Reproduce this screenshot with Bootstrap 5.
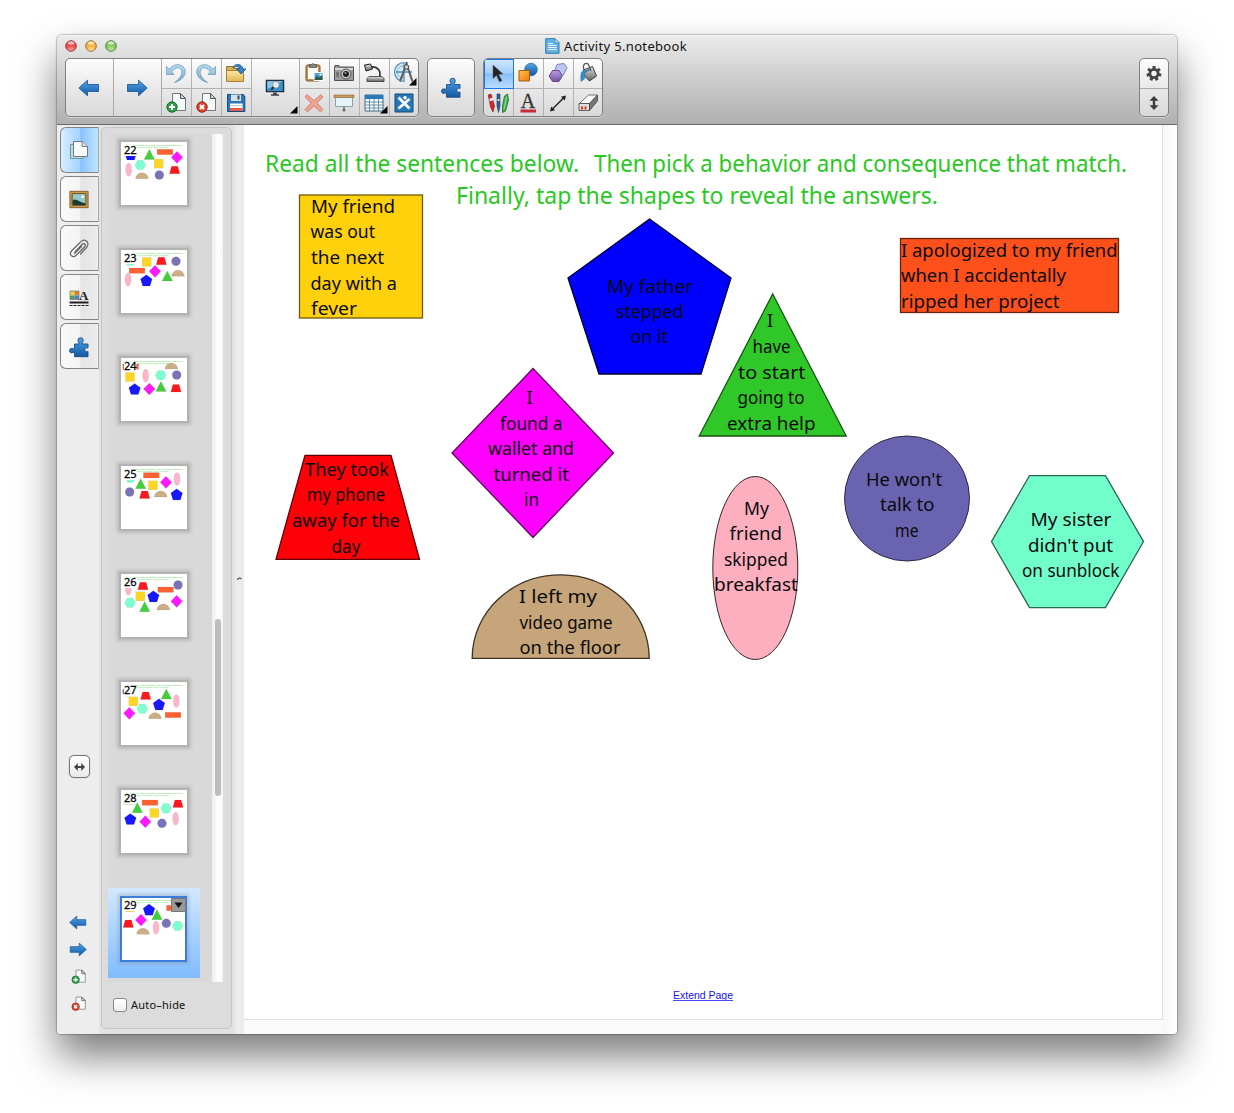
<!DOCTYPE html>
<html lang="en">
<head>
<meta charset="utf-8">
<title>Activity 5.notebook</title>
<link href="https://cdn.jsdelivr.net/npm/bootstrap@5.3.0/dist/css/bootstrap.min.css" rel="stylesheet">
<style>
body{background:#fff;font-family:"Noto Sans","Open Sans",sans-serif;height:1113px;overflow:hidden;padding:35px 57px 0;color:#111}
svg{display:block;flex:none;overflow:visible}
.app-window{width:1120px;height:999px;border-radius:5px 5px 4px 4px;background:#ececec;box-shadow:0 22px 40px rgba(0,0,0,.52),0 0 1px 1px rgba(0,0,0,.22);overflow:hidden}
.app-head{height:90px;background:linear-gradient(#ebebeb,#cfcfcf 45%,#b0b0b0);border-top:1px solid #f6f6f6;border-bottom:1px solid #696969}
.title-row{height:22px;padding:0 0 2px 8px}
.title-wrap{padding-left:426px}
.title-text{font-size:13px;letter-spacing:.33px;line-height:20px}
.tool-row{padding:0 8px;height:59px}
.tool-group{height:59px;border:1px solid #808080;border-radius:5px;background:linear-gradient(#fdfdfd,#e9e9e9 50%,#d9d9d9);overflow:hidden;box-shadow:0 1px 0 rgba(255,255,255,.4)}
.tool-big{width:48px;border-right:1px solid #aaa;position:relative;padding-right:2px}
.tool-grid{display:grid;grid-template-rows:30px 27px;grid-auto-columns:30px;grid-auto-flow:column}
.tool-cell{border-right:1px solid #b2b2b2;border-bottom:1px solid #b2b2b2;display:flex;align-items:center;justify-content:center;position:relative;padding-right:2px}
.tool-cell:nth-child(even){border-bottom:0}
.edge-grid{width:118px}
.edge-grid .tool-cell:nth-last-child(-n+2){width:28px;border-right:0;padding-right:0}
.tool-active{background:linear-gradient(#d2e8ff,#a3cffd 48%,#87c0fc 52%,#b8dcff);outline:1px solid #1c78e6;outline-offset:-1px}
.corner-mark{position:absolute;right:1px;bottom:2px}
.solo-group{width:48px}
.shape-group{width:120px}
.gear-group{width:30px}
.gear-cell{height:30px;border-bottom:1px solid #aaa}
.tab-rail{width:42px;background:#ededed;padding-top:2px}
.side-tab{width:39px;height:46px;margin-left:3px;margin-bottom:3px;padding-right:2px;border:1.5px solid #858585;border-right:1px solid #aaa;border-radius:6px 0 0 6px;background:linear-gradient(90deg,#fafafa,#f3f3f3 52%,#e4e4e4 53%,#ececec)}
.side-tab.on{background:linear-gradient(90deg,#d6efff,#a4d3ff 50%,#8ac2ff 54%,#bfe6ff)}
.width-btn{width:21px;height:23px;border:1px solid #777;border-radius:5px;background:linear-gradient(#fff,#e9e9e9);margin:383px 0 0 12px;box-shadow:0 0 1px #777}
.rail-foot{gap:12px;margin-top:137px}
.page-panel{width:136px;background:#e2e2e2;padding:2px 3px 5px 2px}
.panel-frame{border:2px solid #c6c6c6;border-width:1.5px;border-radius:5px;background:#dcdcdc;height:902px;padding:6px 0 0 6px}
.thumb-list{width:104px;height:848px;background:#d9d9d9;overflow:hidden}
.thumb-slot{height:108px;padding:6px 0 0 11px;position:relative}
.thumb-slot.picked{background:linear-gradient(#d3e8ff,#80bcff);width:92px;height:90px;margin-top:-2px;padding-top:8px}
.thumb-box{width:70px;height:67px;border:2px solid #b2b2b2;background:#fff;box-shadow:0 0 3px 2px rgba(120,120,120,.28)}
.picked .thumb-box{border:2px solid #3c7ddb;margin-left:1px;width:67px;height:66px}
.thumb-slot .menu-mark{position:absolute;left:63px;top:10px}
.scroll-track{width:11px;height:848px;background:linear-gradient(90deg,#eee,#fff 60%,#f3f3f3);padding:485px 0 0 3px}
.scroll-thumb{width:6px;height:177px;border-radius:3px;background:#bdbdbd}
.auto-row{padding:16px 0 0 5px;gap:4px}
.auto-box{width:14px;height:14px;border:1px solid #888;border-radius:3px;background:linear-gradient(#fff,#eee)}
.auto-text{font-size:11px;letter-spacing:.22px;line-height:14px}
.split-bar{width:9px;background:#ececec;padding-top:451px}
.canvas-area{width:933px;background:linear-gradient(90deg,#f4f4f4 918px,#f7f7f7 919px,#fff)}
.sheet{width:919px;height:895px;background:#fff;border-right:1px solid #e1e1e1;border-bottom:1px solid #e1e1e1;box-shadow:0 16px 0 #fafafa}
.story{font-family:"Comic Sans MS","Noto Sans","Open Sans",sans-serif;font-size:18px;fill:#0b0b0b}
.story-head{font-size:23.5px;fill:#2ac823}
.thumb-num{font-family:"Noto Sans",sans-serif;font-size:33px;fill:#000;stroke:#000;stroke-width:.8px}
</style>
</head>
<body>
<svg width="0" height="0" class="position-absolute" aria-hidden="true">
<defs>
<linearGradient id="blueG" x2="0" y2="1"><stop stop-color="#5aa3df"/><stop offset=".5" stop-color="#2f7fc8"/><stop offset="1" stop-color="#14589f"/></linearGradient>
<linearGradient id="paleG" x2="0" y2="1"><stop stop-color="#b9dcee"/><stop offset="1" stop-color="#74a9cb"/></linearGradient>
<linearGradient id="goldG" x2="0" y2="1"><stop stop-color="#fbe9a3"/><stop offset="1" stop-color="#e0b652"/></linearGradient>
<linearGradient id="orG" x2="1" y2="1"><stop stop-color="#ffc04d"/><stop offset="1" stop-color="#ee7c0c"/></linearGradient>
<linearGradient id="metalG" x2="0" y2="1"><stop stop-color="#e3e3e3"/><stop offset="1" stop-color="#5f5f5f"/></linearGradient>
<linearGradient id="violG" x2="0" y2="1"><stop stop-color="#b5a0dd"/><stop offset="1" stop-color="#76509f"/></linearGradient>
<rect id="sq" x="-61.500" y="-61.500" width="123" height="123" fill="#ffd10d" stroke="#6e5a0c" stroke-width="1.300"/>
<path id="pent" d="M0-77.500 81.500-18.500 51.500 77.500-50.500 77.500-81.500-18.500z" fill="#0000fe" stroke="#000033" stroke-width="1.300"/>
<path id="tri" d="M0-71 73.500 71-73.500 71z" fill="#30c828" stroke="#145412" stroke-width="1.300"/>
<rect id="bar" x="-109" y="-37" width="218" height="74" fill="#fd501b" stroke="#66220c" stroke-width="1.300"/>
<path id="dia" d="M0-84.500 80.500 0 0 84.500-81 0z" fill="#fe00fe" stroke="#600060" stroke-width="1.300"/>
<path id="trap" d="M-43-52H43L71.500 52H-72z" fill="#fd0008" stroke="#620004" stroke-width="1.300"/>
<path id="semi" d="M-88.500 42C-88.500-4-49-41.500 0-41.500S88.500-4 88.500 42z" fill="#c6a57a" stroke="#3d3325" stroke-width="1.300"/>
<circle id="circ" r="62.500" fill="#6a63b0" stroke="#2b2846"/>
<ellipse id="ell" rx="42.500" ry="91.500" fill="#fdafc0" stroke="#30262a"/>
<path id="hex" d="M-76 0-38-66H38L76 0 38 66H-38z" fill="#72fecb" stroke="#2d6651" stroke-width="1.300"/>
<path id="leftArrow" d="M.8 9 9.500 1.200V5.500H20.500V12.500H9.500V16.800z" fill="url(#blueG)" stroke="#1c5c9e" stroke-width=".9"/>
<path id="puzzle" d="M5 6.500H9.500C9.800 5 8.500 4.600 8.500 2.800A2.600 2.600 0 0 1 13.700 2.800C13.700 4.600 12.500 5 12.700 6.500H18.500V10.500C16.500 10 15.300 10.500 15.300 12.300S16.500 14.600 18.500 14V19.200H5V14.800C3.500 14.600 3.200 15.700 1.800 15.400A2.300 2.300 0 0 1 1.800 10.900C3.200 10.700 3.500 11.700 5 11.400z" fill="url(#blueG)" stroke="#174d87" stroke-width=".9"/>
<g id="sheetIcon"><path d="M7.500 1.500H15.500L20.500 6.500V18.500H7.500z" fill="#f4f9fb" stroke="#777"/><path d="M15.500 1.500V6.500H20.500z" fill="#ccd8dd" stroke="#555"/></g>
<g id="addPage"><use href="#sheetIcon"/><circle cx="7" cy="15" r="5.200" fill="#2e9e48" stroke="#176b2b"/><path d="M7 12V18M4 15H10" stroke="#fff" stroke-width="2"/></g>
<g id="delPage"><use href="#sheetIcon"/><circle cx="7" cy="15" r="5.200" fill="#e0462b" stroke="#962210"/><path d="M5 13 9 17M9 13 5 17" stroke="#fff" stroke-width="2"/></g>
<path id="undoIc" d="M1.500 3.500V11.500H9L6.700 9C9 5 13.500 3.500 15.700 6 18.500 9.500 16 15 9.500 19.500 17 17.500 21.500 12 20 6.500 18 1 9-.8 4.300 6.300z" fill="url(#paleG)" stroke="#6d9dbd" stroke-width=".8"/>
<path id="corner" d="M7.500 0V7.500H0z" fill="#000"/>
</defs>
</svg>

<main class="app-window d-flex flex-column">
<header class="app-head">
  <div class="title-row d-flex align-items-center">
    <svg width="54" height="14" viewBox="0 0 54 14">
      <g stroke-width="1"><circle cx="6" cy="7" r="5.300" fill="#ed514d" stroke="#963b37"/><circle cx="26" cy="7" r="5.300" fill="#f6b544" stroke="#9b6c28"/><circle cx="46" cy="7" r="5.300" fill="#89ca61" stroke="#4d8536"/></g>
      <g fill="#fff" opacity=".6"><ellipse cx="6" cy="4" rx="3" ry="1.700"/><ellipse cx="26" cy="4" rx="3" ry="1.700"/><ellipse cx="46" cy="4" rx="3" ry="1.700"/></g>
      <g fill="#fff" opacity=".28"><ellipse cx="6" cy="10" rx="3.400" ry="2"/><ellipse cx="26" cy="10" rx="3.400" ry="2"/><ellipse cx="46" cy="10" rx="3.400" ry="2"/></g>
    </svg>
    <div class="title-wrap d-flex align-items-center">
      <svg width="15" height="16" viewBox="0 0 15 16"><path d="M.7.700H10L14 4.700V15.300H.700z" fill="#62b2e6" stroke="#347cae"/><path d="M10 .700V4.700H14z" fill="#c4e4f6" stroke="#347cae" stroke-width=".6"/><path d="M3 5.500H8M3 7.500H11.500M3 9.500H11.500M3 11.500H11.500" stroke="#eaf6fd"/></svg>
      <span class="title-text ms-1">Activity 5.notebook</span>
    </div>
  </div>
  <div class="tool-row d-flex">
    <div class="tool-group d-flex">
      <div class="tool-big d-flex align-items-center justify-content-center"><svg width="22" height="18"><use href="#leftArrow"/></svg></div>
      <div class="tool-big d-flex align-items-center justify-content-center"><svg width="22" height="18"><use href="#leftArrow" transform="matrix(-1 0 0 1 22 0)"/></svg></div>
      <div class="tool-grid">
        <div class="tool-cell"><svg width="22" height="22"><use href="#undoIc"/></svg></div>
        <div class="tool-cell"><svg width="22" height="22"><use href="#addPage"/></svg></div>
        <div class="tool-cell"><svg width="22" height="22"><use href="#undoIc" transform="matrix(-1 0 0 1 22 0)"/></svg></div>
        <div class="tool-cell"><svg width="22" height="22"><use href="#delPage"/></svg></div>
        <div class="tool-cell"><svg width="22" height="22" viewBox="0 1 22 22"><path d="M1.500 4.500H8L9.500 6.500H17.500V19H1.500z" fill="#d9ae50" stroke="#98752c"/><path d="M1.500 8.500H18.500V19.500H1.500z" fill="url(#goldG)" stroke="#a98134"/><path d="M8 6C9 1.500 16.500.5 18 7H21L16 12 11.500 7H14.500C14 4 11 4 8 6z" fill="#3881c8" stroke="#1c558e" stroke-width=".8"/></svg></div>
        <div class="tool-cell"><svg width="22" height="22" viewBox="0 0 22 22"><path d="M2.500 2.500H18L19.800 4V19.500H2.500z" fill="#2c77b7" stroke="#154b7b"/><path d="M6 2.500H16V9H6z" fill="#d8e0e6"/><path d="M12.500 3.500H14.500V7.500H12.500z" fill="#26506f"/><path d="M5 11.500H17.500V19H5z" fill="#fff"/><path d="M5 16H17.500V19H5z" fill="#e35b4b"/><path d="M5 13.500H17.500" stroke="#ccc"/></svg></div>
      </div>
      <div class="tool-big d-flex align-items-center justify-content-center"><svg width="22" height="18" viewBox="0 0 22 20"><path d="M1.500 1.500H20.500V14H1.500z" fill="#3891cc" stroke="#24313b" stroke-width="1.600"/><path d="M2.500 2.500H19.500L2.500 11z" fill="#85c7ed"/><circle cx="12" cy="6.500" r="3.200" fill="#d9eefa" stroke="#fff" stroke-width="1.500"/><circle cx="12" cy="6.500" r="3.700" fill="none" stroke="#333" stroke-width=".6"/><path d="M9.500 9 7 12" stroke="#222" stroke-width="1.800"/><path d="M9 15H13V17H15.500V18.500H6.500V17H9z" fill="#3b444b"/></svg><svg class="corner-mark" width="8" height="8"><use href="#corner"/></svg></div>
      <div class="tool-grid edge-grid">
        <div class="tool-cell"><svg width="22" height="22" viewBox="0 1 22 22"><rect x="3" y="3" width="14" height="16" rx="1.500" fill="#c3914c" stroke="#7d5d29"/><path d="M5 5H15V17H5z" fill="#fcfcfc"/><path d="M6.500 2.500H8.500A1.800 1.800 0 0 1 11.500 2.500H13.500V5.500H6.500z" fill="#888" stroke="#444" stroke-width=".7"/><path d="M11 10.500H20V18.500H11z" fill="#53a5cd" stroke="#fff"/><path d="M11.500 17 14 13.500 16 15.500 19.500 13.500V18H11.500z" fill="#285d47"/><circle cx="17.500" cy="12.500" r="1" fill="#fff"/></svg></div>
        <div class="tool-cell"><svg width="22" height="22" viewBox="0 0 22 22"><path d="M4 2.500 11 8.500 18 2.500 20 5 14 11 20 17.500 17.500 20 11 14 4.500 20 2 17.500 8 11 2 5z" fill="#eda294" stroke="#cb7b6c" stroke-width=".8"/></svg></div>
        <div class="tool-cell"><svg width="22" height="20" viewBox="0 1 22 20"><path d="M2 2.500H6V4H20.500V17.500H1.500V4H2z" fill="#9b9b9b" stroke="#505050"/><path d="M2 5H20V7H2z" fill="#d9d9d9"/><circle cx="13" cy="11" r="5" fill="#c6c6c6" stroke="#555"/><circle cx="13" cy="11" r="3" fill="#222"/><circle cx="12.500" cy="10" r="1" fill="#7fb0cd"/><path d="M3 9H6V14H3z" fill="#777"/></svg></div>
        <div class="tool-cell"><svg width="22" height="20" viewBox="0 0 22 20"><path d="M2.500 4H19.500V13.500H2.500z" fill="#e6f3f8" stroke="#8fa2aa"/><path d="M1 2H21V4.500H1z" fill="#c69d5e" stroke="#87652f" stroke-width=".6"/><path d="M11 13.500V18" stroke="#777" stroke-width="1.500"/><circle cx="11" cy="17" r="1.500" fill="#666"/></svg></div>
        <div class="tool-cell"><svg width="22" height="22" viewBox="0 1 22 22"><path d="M7 5.200C14 4 18.500 8 16.500 15" fill="none" stroke="#333" stroke-width="1.700"/><path d="M1.500 3 7.500 2 9.500 7 3 9z" fill="url(#metalG)" stroke="#222"/><path d="M6 14.500H19L21 16.500V19.500H4V16.500z" fill="url(#metalG)" stroke="#333" stroke-width=".8"/></svg></div>
        <div class="tool-cell"><svg width="22" height="20" viewBox="0 0 22 20"><path d="M2 2H20V18H2z" fill="#f5fafc" stroke="#426985"/><path d="M2 2H20V6H2z" fill="#287bb8"/><path d="M2 9H20M2 12H20M2 15H20M6.500 6V18M11 6V18M15.500 6V18" stroke="#527b98" stroke-width=".8"/></svg><svg class="corner-mark" width="8" height="8"><use href="#corner"/></svg></div>
        <div class="tool-cell"><svg width="24" height="24" viewBox="0 1 24 24"><path d="M12 1.500A9.500 9.500 0 0 0 12 20.500z" fill="#d7eaf3" stroke="#4f8fb3" stroke-width="1.200"/><path d="M11 5A6 6 0 0 0 11 17" fill="none" stroke="#4f8fb3" stroke-dasharray="1.500 1"/><path d="M4 11H20" stroke="#4f8fb3" stroke-width="1.400"/><path d="M14 4.500 8 20.500M15 4.500 20.500 20.500" stroke="#60666a" stroke-width="2.200"/><path d="M14.500 1V4" stroke="#444" stroke-width="2"/><circle cx="14.500" cy="6" r="2.300" fill="#ccc" stroke="#444"/></svg><svg class="corner-mark" width="8" height="8"><use href="#corner"/></svg></div>
        <div class="tool-cell"><svg width="20" height="20" viewBox="0 0 20 20"><path d="M1 1H19V19H1z" fill="#2677b6" stroke="#124a7c"/><path d="M4.500 4.500 15.500 15.500M15.500 6 4.500 15.500" stroke="#fff" stroke-width="2.800"/><circle cx="11" cy="4.800" r="1.800" fill="#fff"/></svg></div>
      </div>
    </div>
    <div class="tool-group ms-2 d-flex align-items-center justify-content-center solo-group"><svg width="20" height="22" viewBox="-.5 -.5 20 21"><use href="#puzzle"/></svg></div>
    <div class="tool-group ms-2 shape-group">
      <div class="tool-grid edge-grid">
        <div class="tool-cell tool-active"><svg width="22" height="22" viewBox="0 1 22 22"><path d="M6 3 16 12 11.500 12.500 15 18.500 12.500 20 9.500 13.500 6 16.500z" fill="#222" stroke="#666" stroke-width=".6"/></svg></div>
        <div class="tool-cell"><svg width="22" height="22" viewBox="0 0 22 22"><path d="M1.200 3 4 2 7.500 14 6 20 3.500 15z" fill="#d8262b" stroke="#7b1719" stroke-width=".6"/><path d="M2.500 8 6 7" stroke="#fff" stroke-width="2.500"/><path d="M10 2H13V14L11.500 20.500 10 14z" fill="#29639a" stroke="#153b61" stroke-width=".6"/><path d="M10.500 8H12.500" stroke="#ddd" stroke-width="2"/><path d="M17.500 4 20.500 2 21.500 8 18.500 19 15.500 20.500 15.500 14z" fill="#43b152" stroke="#14702a" stroke-width=".8"/><path d="M19.500 5 17 17" stroke="#9edba5"/></svg></div>
        <div class="tool-cell"><svg width="22" height="22" viewBox="0 1 22 22"><circle cx="14" cy="7.500" r="6.300" fill="url(#blueG)" stroke="#255d96" stroke-width=".7"/><path d="M2 8.500H12.500V19H2z" fill="url(#orG)" stroke="#a65b13"/></svg></div>
        <div class="tool-cell"><svg width="22" height="22" viewBox="0 0 22 22"><text x="11" y="16" text-anchor="middle" font-family="Liberation Serif,serif" font-size="20" fill="#333" stroke="#333" stroke-width=".3">A</text><path d="M3.500 17.500H19V20.500H3.500z" fill="#c72b38"/></svg></div>
        <div class="tool-cell"><svg width="22" height="22" viewBox="0 1 22 22"><path d="M10 2.500 17 1.500 20 5.500 16.500 13 10 14 7.500 9z" fill="#bdc6f0" stroke="#7b82bd"/><path d="M5.500 8.500H12L15.300 14 12 19.500H5.500L2.200 14z" fill="url(#violG)" stroke="#66488a"/></svg></div>
        <div class="tool-cell"><svg width="22" height="22" viewBox="0 0 22 22"><path d="M5 17.500 17 5.500" stroke="#222" stroke-width="1.500"/><path d="M19 3.500 17.800 8.500 14 4.700zM3 19.500 4.200 14.500 8 18.300z" fill="#222"/></svg></div>
        <div class="tool-cell"><svg width="22" height="22" viewBox="0 1 22 22"><path d="M6.500 8 15.500 4.500 19.500 14 12.500 19 7.500 14z" fill="url(#metalG)" stroke="#3d3d3d"/><path d="M8 8.500C4 8 3.500 12 4 19.500L7.500 17 8 11 14 7z" fill="#378fc8" stroke="#246b9f" stroke-width=".5"/><path d="M7 8C5 2 9 0 11.500 2.500L14 9" fill="none" stroke="#555" stroke-width="1.200"/></svg></div>
        <div class="tool-cell"><svg width="22" height="22" viewBox="0 0 22 22"><path d="M2.500 11.500 11.500 3H20.500L12.500 11.500z" fill="#f7f7f7" stroke="#555" stroke-width=".8"/><path d="M2 11.500H12.500V18.500H2z" fill="#dedede" stroke="#444" stroke-width=".8"/><path d="M12.500 11.500 20.500 3V9L12.500 18.500z" fill="#777" stroke="#444" stroke-width=".8"/><path d="M4 14.500H6V17.500H4zM7.500 14.500H9.500V17.500H7.500z" fill="#df3428"/></svg></div>
      </div>
    </div>
    <div class="tool-group ms-auto gear-group d-flex flex-column">
      <div class="gear-cell d-flex align-items-center justify-content-center"><svg width="16" height="16" viewBox="-8 -7.500 16 16"><g fill="#454545"><circle r="5.500"/><g id="cog"><rect x="-1.500" y="-7.500" width="3" height="4"/></g><use href="#cog" transform="rotate(51.400)"/><use href="#cog" transform="rotate(102.800)"/><use href="#cog" transform="rotate(154.200)"/><use href="#cog" transform="rotate(205.700)"/><use href="#cog" transform="rotate(257.100)"/><use href="#cog" transform="rotate(308.500)"/></g><circle r="2.700" fill="#f4f4f4"/></svg></div>
      <div class="flex-grow-1 d-flex align-items-center justify-content-center"><svg width="10" height="14" viewBox="0 0 10 14"><path d="M5 0 9.500 4.700H6.200V9.300H9.500L5 14 .5 9.300H3.800V4.700H.5z" fill="#3d3d3d"/></svg></div>
    </div>
  </div>
</header>

<div class="d-flex flex-grow-1">
  <nav class="tab-rail d-flex flex-column">
    <div class="side-tab on d-flex align-items-center justify-content-center"><svg width="20" height="20" viewBox="0 0 20 20"><path d="M1.500 4.500H14V18.500H1.500z" fill="#b9dede" stroke="#6b9b9e"/><path d="M4.500 1.500H13L18.500 6.500V16.500H4.500z" fill="#f7fafa" stroke="#777"/><path d="M13 1.500V6.500H18.500" fill="#dce8e9" stroke="#777"/></svg></div>
    <div class="side-tab d-flex align-items-center justify-content-center"><svg width="20" height="19" viewBox="0 0 22 20"><path d="M1 1H21V19H1z" fill="#cf9b4b" stroke="#805a22"/><path d="M3.500 3.500H18.500V16.500H3.500z" fill="#95c9c8" stroke="#68491e"/><path d="M4 11C8 8 10 13 18 14V16H4z" fill="#193a36"/><circle cx="15" cy="7" r="1.500" fill="#fff"/></svg></div>
    <div class="side-tab d-flex align-items-center justify-content-center"><svg width="22" height="22" viewBox="0 -1 22 22"><path d="M7 14 14 6.500C16.500 4.500 18.500 7 16.500 9L8 17.500C4.500 20.500.500 16.500 3.500 13L12 4.500C16-.5 23 4 18.500 9.500L12.500 16M13.500 8.500 6.500 15.500" fill="none" stroke="#666" stroke-width="1.200" stroke-linecap="round"/></svg></div>
    <div class="side-tab d-flex align-items-center justify-content-center"><svg width="20" height="18" viewBox="0 -1 20 18"><path d="M1 2H5.500V6.500H1z" fill="#e5d34c"/><path d="M5.500 2H10V6.500H5.500z" fill="#df8131"/><path d="M1 6.500H5.500V10.500H1z" fill="#4e9e54"/><path d="M5.500 6.500H10V10.500H5.500z" fill="#4184c1"/><path d="M1 2H10V10.500H1z" fill="none" stroke="#777" stroke-width=".7"/><text x="10" y="10.500" font-family="Liberation Serif,serif" font-weight="bold" font-size="13" fill="#222">A</text><path d="M.500 13.500H19.500" stroke="#222" stroke-width="2"/><path d="M.500 16.500H19.500" stroke="#222" stroke-dasharray="3 1"/></svg></div>
    <div class="side-tab d-flex align-items-center justify-content-center"><svg width="20" height="21" viewBox="-.5 -1.500 20 21"><use href="#puzzle"/></svg></div>
    <div class="width-btn d-flex align-items-center justify-content-center"><svg width="11" height="8" viewBox="0 0 11 8"><path d="M0 4 3.800 0V2.900H7.200V0L11 4 7.200 8V5.100H3.800V8z" fill="#444"/></svg></div>
    <div class="rail-foot d-flex flex-column align-items-center">
      <svg width="18" height="15" viewBox="0 0 22 18"><use href="#leftArrow"/></svg>
      <svg width="18" height="15" viewBox="0 0 22 18"><use href="#leftArrow" transform="matrix(-1 0 0 1 22 0)"/></svg>
      <svg width="15" height="15" viewBox="1 0 20 21"><use href="#addPage"/></svg>
      <svg width="15" height="15" viewBox="1 0 20 21"><use href="#delPage"/></svg>
    </div>
  </nav>
  <aside class="page-panel">
    <div class="panel-frame">
      <div class="d-flex">
        <div class="thumb-list" id="thumbs"></div>
        <div class="scroll-track"><div class="scroll-thumb"></div></div>
      </div>
      <div class="d-flex align-items-center auto-row"><span class="auto-box"></span><span class="auto-text">Auto–hide</span></div>
    </div>
  </aside>
  <div class="split-bar"><svg width="9" height="6" viewBox="0 0 9 6"><path d="M2.500 4C3 2 5 1.500 6.500 3" fill="none" stroke="#555" stroke-width="1.200"/></svg></div>
  <section class="canvas-area">
    <div class="sheet">
      <svg width="918" height="894" viewBox="244 125 918 894">
        <use href="#sq" x="361" y="256.500"/><use href="#pent" x="649.500" y="296.500"/><use href="#tri" x="772.700" y="365"/><use href="#bar" x="1009.500" y="275.500"/><use href="#dia" x="533" y="453"/><use href="#trap" x="348" y="507.300"/><use href="#semi" x="560.700" y="616.300"/><use href="#circ" x="907" y="498.500"/><use href="#ell" x="755.300" y="568"/><use href="#hex" x="1067.500" y="541.600"/>
        <g class="story" id="words"></g>
        <text x="673" y="999" font-family="Liberation Sans,Arial,sans-serif" font-size="10" fill="#1414f0" textLength="60" lengthAdjust="spacingAndGlyphs">Extend Page</text><path d="M673 1000.500H733" stroke="#4a4af4"/>
      </svg>
    </div>
  </section>
</div>
</main>
<script>
/* Sentences: x, width, baseline, text */
const lines = [
 [311,84,213,'My friend'],[310.500,64.500,238.300,'was out'],[311,73,264,'the next'],[310.500,86.500,290,'day with a'],[311,46,315,'fever'],
 [607,86,293,'My father'],[616,67.500,318,'stepped'],[630.500,37.500,343,'on it'],
 [767,0,327,'I'],[752.500,38,353,'have'],[738,67.500,378.500,'to start'],[737.500,67,404,'going to'],[727,88.500,429.500,'extra help'],
 [901,216.500,257,'I apologized to my friend'],[901,165,282,'when I accidentally'],[901,158.500,308,'ripped her project'],
 [526.500,0,404,'I'],[500,62.500,430,'found a'],[488,86,455,'wallet and'],[493.500,75.500,481,'turned it'],[524,15,506,'in'],
 [305,84,476,'They took'],[307,78,501,'my phone'],[292,108,527,'away for the'],[331.500,29,553,'day'],
 [519,78,602.500,'I left my'],[519.500,93,628.500,'video game'],[519.500,101,654,'on the floor'],
 [866,76,486,"He won't"],[880,54.500,511,'talk to'],[895,23.500,537,'me'],
 [744,25,515,'My'],[729.500,52.500,540,'friend'],[724,64,566,'skipped'],[714,84,591,'breakfast'],
 [1030.500,81,526,'My sister'],[1028,85,552,"didn't put"],[1022,97.500,577,'on sunblock']
];
const put = (c, [x, w, y, t]) => `<text class="${c}" x="${x}" y="${y}"${w ? ` textLength="${w}" lengthAdjust="spacingAndGlyphs"` : ''}>${t}</text>`;
document.getElementById('words').innerHTML =
 put('story-head', [265,314,171.500,'Read all the sentences below.']) + put('story-head', [594,533,171.500,'Then pick a behavior and consequence that match.']) +
 put('story-head', [456,482,203.500,'Finally, tap the shapes to reveal the answers.']) +
 lines.map(l => put('', l)).join('');

/* Page sorter: shape and centre for each thumbnail */
const pages = {
 22:'pent 29 37,tri 85 37,bar 132 30,dia 168 46,sq 113 65,hex 58 69,ell 23 83,semi 63 101,circ 115 99,trap 161 84',
 23:'hex 27 32,sq 77 36,trap 121 33,circ 165 34,bar 48 62,dia 102 64,tri 139 78,semi 171 70,ell 21 89,pent 76 91',
 24:'bar 29 26,semi 151 24,sq 27 57,ell 74 53,hex 119 52,circ 167 51,pent 41 93,dia 85 93,tri 120 85,trap 165 91',
 25:'hex 29 35,bar 91 28,ell 168 39,tri 59 53,sq 96 58,dia 135 49,circ 26 78,trap 71 86,semi 119 84,pent 167 85',
 26:'ell 22 44,trap 66 36,bar 134 47,circ 171 33,sq 58 67,pent 97 67,hex 27 86,dia 167 82,tri 71 98,semi 127 99',
 27:'circ 18 29,trap 74 41,tri 136 36,ell 166 57,sq 37 58,pent 114 67,hex 64 80,dia 25 94,semi 102 101,bar 156 99',
 28:'semi 27 34,bar 87 38,trap 171 41,tri 49 53,hex 135 55,sq 100 69,pent 28 87,dia 73 95,circ 123 100,ell 164 86',
 29:'sq 27 31,pent 84 38,tri 108 53,bar 160 33,dia 60 69,trap 22 80,semi 66 103,ell 105 92,circ 136 79,hex 170 87'
};
document.getElementById('thumbs').innerHTML = Object.entries(pages).map(([n, list]) => {
 const shapes = list.split(',').map(s => { const [id, x, y] = s.split(' '); return `<use href="#${id}" transform="translate(${x} ${y}) scale(.216)"/>`; }).join('');
 const sel = n === '29';
 const mark = sel ? '<svg class="menu-mark" width="15" height="14" viewBox="0 0 15 14"><path d="M.5.5H14.500V13.500H.5z" fill="#999" stroke="#777"/><path d="M3.500 4.500H11.500L7.500 10z" fill="#111"/></svg>' : '';
 const box = sel ? '3 3 189 186' : '0 0 198 189';
 return `<div class="thumb-slot${sel ? ' picked' : ''}"><div class="thumb-box"><svg width="${sel ? 63 : 66}" height="${sel ? 62 : 63}" viewBox="${box}"><path d="M8 10.500H185M48 17H145" stroke="#a9e5a7" stroke-width="2.500" stroke-dasharray="14 2 8 2 20 3"/><g opacity=".9">${shapes}</g><path d="M9 10H46V42H9z" fill="#fff"/><text class="thumb-num" x="9" y="37" textLength="38" lengthAdjust="spacingAndGlyphs">${n}</text></svg></div>${mark}</div>`;
}).join('');
</script>
<script src="https://cdn.jsdelivr.net/npm/bootstrap@5.3.0/dist/js/bootstrap.bundle.min.js"></script>
</body>
</html>
